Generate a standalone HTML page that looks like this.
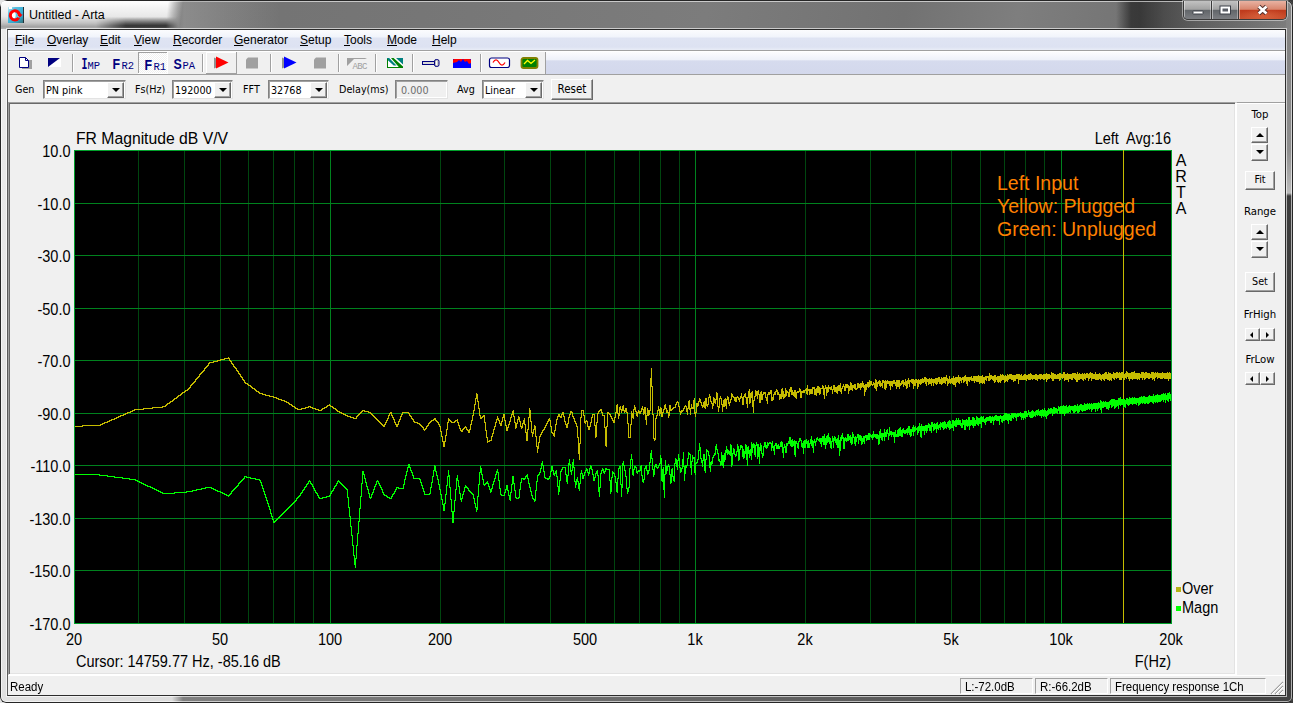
<!DOCTYPE html>
<html><head><meta charset="utf-8"><title>Untitled - Arta</title>
<style>
*{box-sizing:border-box;margin:0;padding:0}
html,body{width:1293px;height:703px;overflow:hidden;background:linear-gradient(90deg,#e4e4e4 0,#e4e4e4 50%,#3a3a3a 50%,#3a3a3a 100%)}
body{position:relative;font-family:"Liberation Sans",Arial,sans-serif;font-size:12px;color:#000}
.abs,.abs *{position:absolute}
#frame{position:absolute;left:0;top:0;width:1293px;height:703px;border-radius:7px 7px 6px 6px;overflow:hidden;
 background:
  linear-gradient(90deg,rgba(0,0,0,0) 1116px,rgba(20,20,20,.6) 1131px,rgba(20,20,20,.62) 1140px,rgba(20,20,20,.42) 1165px,rgba(20,20,20,.25) 1200px,rgba(0,0,0,0) 1293px) 0 0/1293px 29px no-repeat,
  linear-gradient(90deg,#e2e2e2 0,#dcdcdc 172px,#808080 183px,#747474 500px,#5a5a5a 900px,#454545 1200px,#434343 1293px) 0 696px/1293px 7px no-repeat,
  linear-gradient(180deg,#ececec 0,#e0e0e0 100%) 0 0/7px 703px no-repeat,
  linear-gradient(180deg,#868686 0,#848484 60px,#8e8e8e 150px,#bcbcbc 193px,#3c3c3c 196px,#3e3e3e 703px) 1286px 0/7px 703px no-repeat,
  linear-gradient(100deg,#707070 0,#767676 30%,#7c7c7c 50%,#727272 64%,#7e7e7e 72%,#747474 80%,#868686 100%);
 box-shadow:inset 0 0 0 1px #262626, inset 0 0 0 2px rgba(255,255,255,.6);}
#tglow{position:absolute;left:1px;top:1px;width:190px;height:28px;background:linear-gradient(180deg,#ffffff 0,#f4f4f4 25%,#e8e8e8 55%,#c4c4c4 78%,#a2a2a2 92%,#b4b4b4 100%);-webkit-mask-image:linear-gradient(97deg,#000 0,#000 166px,transparent 181px);mask-image:linear-gradient(97deg,#000 0,#000 166px,transparent 181px)}
#tshadow{position:absolute;left:96px;top:17px;width:84px;height:11px;background:linear-gradient(180deg,rgba(50,50,50,0) 0,rgba(50,50,50,.55) 45%,rgba(45,45,45,.95) 80%,rgba(60,60,60,.9) 100%);-webkit-mask-image:linear-gradient(90deg,transparent 0,#000 30px,#000 70px,transparent 82px);mask-image:linear-gradient(90deg,transparent 0,#000 30px,#000 70px,transparent 82px)}
#tlite{position:absolute;left:170px;top:1px;width:110px;height:28px;background:linear-gradient(90deg,rgba(160,160,160,.0) 0,rgba(160,160,160,.55) 14px,rgba(150,150,150,0) 100%)}
#title{position:absolute;left:29px;top:8px;font-size:12.5px;line-height:15px;white-space:nowrap;color:#000}
#client{position:absolute;left:7px;top:29px;width:1279px;height:667px;border:1px solid #2c2c2c;border-left-color:#5a5a5a;background:#f0f0f0;box-shadow:0 0 0 1px rgba(255,255,255,.62)}
#menubar{position:absolute;left:8px;top:30px;width:1277px;height:20px;background:linear-gradient(180deg,#fbfcfe 0,#f1f4fb 35%,#dfe4f3 40%,#dde2f2 85%,#e9edf7 100%)}
#menubar span{position:absolute;top:3px;line-height:15px;white-space:nowrap}
#menubar u{text-decoration:underline;text-underline-offset:1px}
#mline{position:absolute;left:8px;top:50px;width:1277px;height:2px;background:linear-gradient(180deg,#a0a0a0 0,#a0a0a0 50%,#fff 50%)}
#rebar{position:absolute;left:8px;top:52px;width:1277px;height:22px;background:linear-gradient(180deg,#fcfcfe 0,#eef1f9 36%,#d6dbee 40%,#d3d8ec 100%)}
#toolbar{position:absolute;left:8px;top:52px;width:538px;height:22px;background:#f0f0f0;border-right:1px solid #a0a0a0}
#rline{position:absolute;left:8px;top:74px;width:1277px;height:1px;background:#a0a0a0}
#ctl{position:absolute;left:8px;top:76px;width:1277px;height:26px;background:#f0f0f0;font-size:10.7px;font-family:"DejaVu Sans Condensed","DejaVu Sans","Liberation Sans",sans-serif}
#ctl span{position:absolute;top:7px;line-height:13px;white-space:nowrap}
.combo{position:absolute;top:4px;height:19px;background:#fff;border:1px solid;border-color:#828282 #e3e3e3 #e3e3e3 #828282;box-shadow:inset 1px 1px 0 #a0a0a0, inset -1px -1px 0 #fff}
.combo b{position:absolute;left:2px;top:3px;font-weight:normal;font-size:10.7px;line-height:13px}
.combo i{position:absolute;right:1px;top:1px;width:17px;height:16px;background:#f0f0f0;border:1px solid;border-color:#fff #696969 #696969 #fff;box-shadow:inset -1px -1px 0 #a0a0a0}
.combo i:after{content:"";position:absolute;left:4px;top:5px;border:4px solid transparent;border-top:4px solid #000;border-bottom:0}
.btn{position:absolute;background:#f0f0f0;border:1px solid;border-color:#fff #696969 #696969 #fff;box-shadow:inset -1px -1px 0 #a0a0a0, inset 1px 1px 0 #f0f0f0;font-size:10.7px;text-align:center}
#view{position:absolute;left:8px;top:102px;width:1228px;height:573px;background:#f0f0f0;border:1px solid;border-color:#a0a0a0 #fff #fff #a0a0a0;box-shadow:inset 1px 1px 0 #696969, inset -1px -1px 0 #e3e3e3}
#side{position:absolute;left:1236px;top:102px;width:49px;height:573px;background:#f0f0f0;border-top:1px solid #a0a0a0;border-left:1px solid #fff;box-shadow:inset 0 1px 0 #fff;font-size:11.3px;font-family:"DejaVu Sans Condensed","DejaVu Sans","Liberation Sans",sans-serif}
#side span{position:absolute;left:0;width:46px;text-align:center;line-height:13px}
.sp{position:absolute;width:17px;height:16px;background:#f0f0f0;border:1px solid;border-color:#fff #696969 #696969 #fff;box-shadow:inset -1px -1px 0 #a0a0a0}
.sp:after{content:"";position:absolute;left:4px;top:4px;border:4px solid transparent}
.sp.u:after{border-bottom:4px solid #000;border-top:0;top:5px}
.sp.d:after{border-top:4px solid #000;border-bottom:0;top:5px}
.hs{position:absolute;width:15px;height:13px;background:#f0f0f0;border:1px solid;border-color:#fff #696969 #696969 #fff;box-shadow:inset -1px -1px 0 #a0a0a0}
.hs:after{content:"";position:absolute;top:3px;border:3px solid transparent}
.hs.l:after{left:2px;border-right:3px solid #000;border-left:0;left:4px}
.hs.r:after{left:5px;border-left:3px solid #000;border-right:0}
#status{position:absolute;left:8px;top:675px;width:1277px;height:20px;background:#f0f0f0;border-top:1px solid #fff;font-size:11.5px}
#status span{position:absolute;top:4px;line-height:15px;white-space:nowrap;font-size:12px;transform:scaleX(.955);transform-origin:0 0}
.pane{position:absolute;top:2px;height:16px;border:1px solid;border-color:#a0a0a0 #fff #fff #a0a0a0}
.plot{position:absolute;left:0;top:0}
.tsep{position:absolute;top:3px;width:2px;height:18px;border-left:1px solid #a0a0a0;border-right:1px solid #fff}
.tt{position:absolute;top:4px;color:#000080;font-weight:bold;font-family:"Liberation Mono","DejaVu Sans Mono",monospace;white-space:nowrap;line-height:16px}
.tt big{font-size:17px;font-family:"Liberation Sans",sans-serif;font-weight:bold}
.tt small{font-size:11px;font-weight:normal;letter-spacing:0}
#caps{position:absolute;left:1183px;top:1px;width:104px;height:19px;border:1px solid #3a3a3a;border-top:0;border-radius:0 0 5px 5px;overflow:hidden;box-shadow:0 0 0 1px rgba(255,255,255,.45)}
#caps div{position:absolute;top:0;height:18px}
</style></head><body>
<div id="frame">
<div id="tlite"></div><div id="tglow"></div><div id="tshadow"></div>
<svg style="position:absolute;left:8px;top:7px" width="16" height="16" viewBox="0 0 16 16">
<defs><linearGradient id="ibg" x1="0" y1="0" x2="1" y2="1"><stop offset="0" stop-color="#c8ecf6"/><stop offset=".25" stop-color="#58bfe0"/><stop offset=".7" stop-color="#2fa6cf"/><stop offset="1" stop-color="#3b6a6a"/></linearGradient></defs>
<rect width="16" height="16" fill="url(#ibg)"/>
<rect x="15" y="0" width="1" height="16" fill="#22343c"/><rect x="1" y="0" width="3" height="2" fill="#fff"/>
<circle cx="7" cy="8.200" r="4.600" fill="#5ccbe4"/>
<ellipse cx="5.700" cy="8.100" rx="2" ry="3.500" fill="#fff"/>
<path d="M11.400 9.300A4.600 4.600 0 1 0 10.800 10.800" fill="none" stroke="#ff0000" stroke-width="3"/>
<path d="M8.800 5.600L14.700 7.700L11.700 10.500L10.300 8.300Z" fill="#ff0000"/>
</svg>
<div id="title">Untitled - Arta</div>
<div id="caps">
<div style="left:0;width:28px;background:linear-gradient(180deg,#c2c2c2 0,#a2a2a2 46%,#62666a 52%,#7c7e82 100%);border-right:1px solid #3a3a3a;box-shadow:inset 1px 0 0 rgba(255,255,255,.45),inset -1px 0 0 rgba(255,255,255,.35)"></div>
<div style="left:28px;width:27px;background:linear-gradient(180deg,#c2c2c2 0,#a2a2a2 46%,#62666a 52%,#7c7e82 100%);border-right:1px solid #3a3a3a;box-shadow:inset 1px 0 0 rgba(255,255,255,.45),inset -1px 0 0 rgba(255,255,255,.35)"></div>
<div style="left:55px;width:48px;background:radial-gradient(ellipse 24px 8px at 50% 85%,rgba(226,110,70,.6),rgba(200,60,30,0)),linear-gradient(180deg,#e8b2a2 0,#d8866e 46%,#bf3a1c 52%,#c9502e 100%);box-shadow:inset 1px 0 0 rgba(255,255,255,.45),inset -1px 0 0 rgba(255,255,255,.35)"></div>
<svg style="left:0;top:0;position:absolute" width="104" height="19" viewBox="0 0 104 19">
<rect x="9" y="10" width="10" height="3" rx="0.500" fill="#fff" stroke="#3c4048" stroke-width="1"/>
<rect x="37.500" y="6.500" width="7.500" height="5" fill="none" stroke="#3c4048" stroke-width="4"/><rect x="37.500" y="6.500" width="7.500" height="5" fill="#5a5e66" stroke="#fff" stroke-width="2"/>
<path d="M74.800 5.500L82.500 12.500M82.500 5.500L74.800 12.500" stroke="#53302c" stroke-width="4.400" fill="none"/>
<path d="M74.800 5.500L82.500 12.500M82.500 5.500L74.800 12.500" stroke="#fff" stroke-width="2.600" fill="none"/>
</svg>
</div>
</div>
<div id="client"></div>
<div id="menubar">
<span style="left:7px"><u>F</u>ile</span><span style="left:39px"><u>O</u>verlay</span><span style="left:92px"><u>E</u>dit</span><span style="left:126px"><u>V</u>iew</span><span style="left:165px"><u>R</u>ecorder</span><span style="left:226px"><u>G</u>enerator</span><span style="left:292px"><u>S</u>etup</span><span style="left:336px"><u>T</u>ools</span><span style="left:379px"><u>M</u>ode</span><span style="left:424px"><u>H</u>elp</span>
</div>
<div id="mline"></div>
<div id="rebar"></div>
<div id="toolbar">
<svg style="position:absolute;left:0;top:-1px" width="538" height="24" viewBox="0 0 538 24" shape-rendering="crispEdges">
<defs><pattern id="dith" width="2" height="2" patternUnits="userSpaceOnUse"><rect width="2" height="2" fill="#f0f0f0"/><rect width="1" height="1" fill="#fff"/><rect x="1" y="1" width="1" height="1" fill="#fff"/></pattern></defs>
<!-- new doc -->
<rect x="14" y="9" width="10" height="9" fill="#a0a0a0"/>
<path d="M11.500 6.500h6l3 3v7h-9z" fill="#fff" stroke="#000080" stroke-width="1" shape-rendering="auto"/>
<path d="M17.500 6.500v3h3" fill="none" stroke="#000080" stroke-width="1" shape-rendering="auto"/>
<!-- triangle -->
<rect x="40" y="7" width="13" height="9" fill="#fff"/>
<path d="M40 7h12l-12 9z" fill="#000080" shape-rendering="auto"/>
<!-- separators -->
<g fill="#a0a0a0"><rect x="64" y="3" width="1" height="18"/><rect x="194" y="3" width="1" height="18"/><rect x="262" y="3" width="1" height="18"/><rect x="330" y="3" width="1" height="18"/><rect x="367" y="3" width="1" height="18"/><rect x="404" y="3" width="1" height="18"/><rect x="472" y="3" width="1" height="18"/></g>
<g fill="#fff"><rect x="65" y="3" width="1" height="18"/><rect x="195" y="3" width="1" height="18"/><rect x="263" y="3" width="1" height="18"/><rect x="331" y="3" width="1" height="18"/><rect x="368" y="3" width="1" height="18"/><rect x="405" y="3" width="1" height="18"/><rect x="473" y="3" width="1" height="18"/></g>
<!-- pressed FR1 -->
<rect x="130" y="1" width="30" height="22" fill="url(#dith)"/>
<rect x="130" y="1" width="30" height="1" fill="#a0a0a0"/><rect x="130" y="1" width="1" height="22" fill="#a0a0a0"/><rect x="130" y="22" width="30" height="1" fill="#fff"/><rect x="159" y="1" width="1" height="22" fill="#fff"/>
<!-- raised red play -->
<rect x="198" y="1" width="31" height="1" fill="#fff"/><rect x="198" y="1" width="1" height="22" fill="#fff"/><rect x="198" y="22" width="31" height="1" fill="#a0a0a0"/><rect x="228" y="1" width="1" height="22" fill="#a0a0a0"/>
<g shape-rendering="auto">
<path d="M206 6.500l0 11 12-5.500z" fill="#909090"/>
<path d="M208 5.500l0 12 12.500-6z" fill="#ff0000"/>
<path d="M240 6.500h10v11h-12v-9z" fill="#a0a0a0"/>
<path d="M274 6.500l0 11 12-5.500z" fill="#909090"/>
<path d="M276 5.500l0 12 12.500-6z" fill="#0000ff"/>
<path d="M308 6.500h10v11h-12v-9z" fill="#a0a0a0"/>
<path d="M339 7h20l-2 1h-11l-7 7z" fill="#a0a0a0"/>
</g>
<!-- green hatch -->
<rect x="379" y="7" width="16" height="10" fill="#fff"/>
<g shape-rendering="auto"><path d="M379 7h2.200l7.300 7.500h-2.800l-6.700-6z" fill="#008080"/><path d="M383 7h2.600l9.400 8.600v1.400h-3.400z" fill="#008000"/><path d="M388 7h7v6.600z" fill="#008080"/></g>
<rect x="379" y="8" width="1" height="9" fill="#008000"/><rect x="379" y="16" width="16" height="1" fill="#008000"/>
<!-- key -->
<g shape-rendering="auto"><rect x="414.500" y="10.500" width="12" height="3" fill="#d8d8d8" stroke="#000080"/><rect x="426.500" y="8.500" width="4.500" height="7" rx="1.800" fill="#c0c0c0" stroke="#000080"/><rect x="428" y="10" width="1.200" height="4" fill="#fff"/></g>
<!-- blue/red -->
<rect x="445" y="8" width="18" height="9" fill="#0000ff"/>
<path d="M445 12v-3l1-1h16l1 1v3l-2 1-2-3-2 1-2-3-2 3-2-2-2 2z" fill="#ff0000" shape-rendering="auto"/>
<!-- red sine box -->
<g shape-rendering="auto"><rect x="481.500" y="7" width="20" height="9.500" rx="2" fill="#fff" stroke="#000080" stroke-width="1.200"/><path d="M485 11.500c2-3.500 4-3.500 6 0s4 3.500 6 0" fill="none" stroke="#ff0000" stroke-width="1.300"/></g>
<!-- green box -->
<g shape-rendering="auto"><rect x="513.500" y="7" width="16" height="10" rx="2" fill="#008000" stroke="#808000" stroke-width="1.800"/><path d="M516 13l3.500-3.500 3.500 3 4-3.500" fill="none" stroke="#ffff00" stroke-width="1.300"/></g>
<g shape-rendering="auto" font-family="'Liberation Sans',sans-serif" fill="#000080">
<text transform="translate(73.5,17.5) scale(.62,1)" font-family="'Liberation Mono',monospace" font-weight="bold" font-size="16px">I</text>
<text x="79.500" y="17.500" font-family="'Liberation Mono',monospace" font-size="10.5px">MP</text>
<text transform="translate(104.5,17.5) scale(.8,1)" font-weight="bold" font-size="15.500px">F</text>
<text x="113.500" y="17.500" font-family="'Liberation Mono',monospace" font-size="10.5px">R2</text>
<text transform="translate(136.5,18.5) scale(.8,1)" font-weight="bold" font-size="15.500px">F</text>
<text x="145.500" y="18.500" font-family="'Liberation Mono',monospace" font-size="10.5px">R1</text>
<text transform="translate(165.5,17.5) scale(.8,1)" font-weight="bold" font-size="15.500px">S</text>
<text x="174.500" y="17.500" font-family="'Liberation Mono',monospace" font-size="10.5px">PA</text>
<text x="344.500" y="17.500" font-family="'Liberation Mono',monospace" font-size="9px" fill="#a0a0a0" textLength="15">ABC</text>
</g>
</svg>

</div>
<div id="rline"></div>
<div id="ctl">
<span style="left:7px">Gen</span>
<div class="combo" style="left:35px;width:83px"><b>PN pink</b><i></i></div>
<span style="left:127px">Fs(Hz)</span>
<div class="combo" style="left:164px;width:61px"><b>192000</b><i></i></div>
<span style="left:235px">FFT</span>
<div class="combo" style="left:260px;width:61px"><b>32768</b><i></i></div>
<span style="left:331px">Delay(ms)</span>
<div class="combo" style="left:387px;width:53px;background:#f0f0f0"><b style="color:#6d6d6d;left:5px">0.000</b></div>
<span style="left:449px">Avg</span>
<div class="combo" style="left:474px;width:62px"><b>Linear</b><i></i></div>
<div class="btn" style="left:543px;top:3px;width:42px;height:21px;line-height:19px;font-size:11.5px">Reset</div>
</div>
<div id="view"></div>
<div id="side">
<span style="top:5px">Top</span>
<div class="sp u" style="left:14px;top:24px"></div><div class="sp d" style="left:14px;top:41px;height:17px"></div>
<div class="btn" style="left:8px;top:68px;width:30px;height:19px;line-height:16px">Fit</div>
<span style="top:102px">Range</span>
<div class="sp u" style="left:14px;top:121px"></div><div class="sp d" style="left:14px;top:138px;height:17px"></div>
<div class="btn" style="left:8px;top:169px;width:30px;height:20px;line-height:17px">Set</div>
<span style="top:205px">FrHigh</span>
<div class="hs l" style="left:8px;top:225px"></div><div class="hs r" style="left:23px;top:225px"></div>
<span style="top:250px">FrLow</span>
<div class="hs l" style="left:8px;top:269px"></div><div class="hs r" style="left:23px;top:269px"></div>
</div>
<div id="status">
<span style="left:2px">Ready</span>
<div class="pane" style="left:952px;width:73px"></div><span style="left:957px">L:-72.0dB</span>
<div class="pane" style="left:1027px;width:73px"></div><span style="left:1032px">R:-66.2dB</span>
<div class="pane" style="left:1102px;width:156px"></div><span style="left:1107px">Frequency response 1Ch</span>
<svg style="position:absolute;left:1262px;top:5px" width="14" height="14" viewBox="0 0 14 14"><path d="M13 1L1 13M13 5L5 13M13 9L9 13" stroke="#a0a0a0" stroke-width="1.2"/><path d="M13 2L2 13M13 6L6 13M13 10L10 13" stroke="#fff" stroke-width="1"/></svg>
</div>
<svg class="plot" width="1293" height="703" viewBox="0 0 1293 703" shape-rendering="crispEdges">
<rect x="74" y="150" width="1098" height="474" fill="#000"/>
<rect x="138" y="150" width="1" height="473" fill="#00460f"/><rect x="184" y="150" width="1" height="473" fill="#00460f"/><rect x="220" y="150" width="1" height="473" fill="#00460f"/><rect x="248" y="150" width="1" height="473" fill="#00460f"/><rect x="273" y="150" width="1" height="473" fill="#00460f"/><rect x="294" y="150" width="1" height="473" fill="#00460f"/><rect x="313" y="150" width="1" height="473" fill="#00460f"/><rect x="440" y="150" width="1" height="473" fill="#00460f"/><rect x="504" y="150" width="1" height="473" fill="#00460f"/><rect x="550" y="150" width="1" height="473" fill="#00460f"/><rect x="585" y="150" width="1" height="473" fill="#00460f"/><rect x="614" y="150" width="1" height="473" fill="#00460f"/><rect x="639" y="150" width="1" height="473" fill="#00460f"/><rect x="660" y="150" width="1" height="473" fill="#00460f"/><rect x="679" y="150" width="1" height="473" fill="#00460f"/><rect x="805" y="150" width="1" height="473" fill="#00460f"/><rect x="870" y="150" width="1" height="473" fill="#00460f"/><rect x="915" y="150" width="1" height="473" fill="#00460f"/><rect x="951" y="150" width="1" height="473" fill="#00460f"/><rect x="980" y="150" width="1" height="473" fill="#00460f"/><rect x="1004" y="150" width="1" height="473" fill="#00460f"/><rect x="1025" y="150" width="1" height="473" fill="#00460f"/><rect x="1044" y="150" width="1" height="473" fill="#00460f"/><rect x="330" y="150" width="1" height="473" fill="#00821e"/><rect x="695" y="150" width="1" height="473" fill="#00821e"/><rect x="1061" y="150" width="1" height="473" fill="#00821e"/><rect x="74" y="203" width="1097" height="1" fill="#00821e"/><rect x="74" y="255" width="1097" height="1" fill="#00821e"/><rect x="74" y="308" width="1097" height="1" fill="#00821e"/><rect x="74" y="360" width="1097" height="1" fill="#00821e"/><rect x="74" y="413" width="1097" height="1" fill="#00821e"/><rect x="74" y="465" width="1097" height="1" fill="#00821e"/><rect x="74" y="518" width="1097" height="1" fill="#00821e"/><rect x="74" y="570" width="1097" height="1" fill="#00821e"/>
<rect x="74.5" y="150.5" width="1097" height="473" fill="none" stroke="#00a02a"/>
<rect x="1123" y="150" width="1" height="473" fill="#c6bc00"/>
<path d="M75.5 426v1M76.5 426v1M77.5 426v1M78.5 426v1M79.5 426v1M80.5 426v1M81.5 426v1M82.5 425v2M83.5 425v1M84.5 425v1M85.5 425v1M86.5 425v1M87.5 425v1M88.5 425v1M89.5 425v1M90.5 425v1M91.5 425v1M92.5 425v1M93.5 425v1M94.5 425v1M95.5 425v1M96.5 425v1M97.5 425v1M98.5 425v1M99.5 425v1M100.5 424v2M101.5 424v1M102.5 423v2M103.5 423v1M104.5 422v2M105.5 422v1M106.5 422v1M107.5 421v2M108.5 421v1M109.5 420v2M110.5 420v1M111.5 419v2M112.5 419v1M113.5 419v1M114.5 418v2M115.5 418v1M116.5 417v2M117.5 417v1M118.5 416v2M119.5 416v1M120.5 415v2M121.5 415v1M122.5 415v1M123.5 414v2M124.5 414v1M125.5 413v2M126.5 413v1M127.5 412v2M128.5 412v1M129.5 412v1M130.5 411v2M131.5 411v1M132.5 410v2M133.5 410v1M134.5 409v2M135.5 409v1M136.5 409v1M137.5 409v1M138.5 409v1M139.5 409v1M140.5 409v1M141.5 409v1M142.5 409v1M143.5 408v2M144.5 408v1M145.5 408v1M146.5 408v1M147.5 408v1M148.5 408v1M149.5 408v1M150.5 408v1M151.5 408v1M152.5 407v2M153.5 407v1M154.5 407v1M155.5 407v1M156.5 407v1M157.5 407v1M158.5 407v1M159.5 407v1M160.5 407v1M161.5 407v1M162.5 406v2M163.5 406v1M164.5 406v1M165.5 405v2M166.5 404v2M167.5 403v2M168.5 403v1M169.5 402v2M170.5 401v2M171.5 401v1M172.5 400v2M173.5 399v2M174.5 398v2M175.5 398v1M176.5 397v2M177.5 396v2M178.5 395v2M179.5 395v1M180.5 394v2M181.5 393v2M182.5 392v2M183.5 392v1M184.5 391v2M185.5 390v2M186.5 390v1M187.5 389v2M188.5 388v2M189.5 387v2M190.5 385v3M191.5 384v2M192.5 383v2M193.5 382v2M194.5 381v2M195.5 379v3M196.5 378v2M197.5 377v2M198.5 376v2M199.5 374v3M200.5 373v2M201.5 372v2M202.5 371v2M203.5 370v2M204.5 368v3M205.5 367v2M206.5 366v2M207.5 365v2M208.5 363v3M209.5 362v2M210.5 362v1M211.5 362v1M212.5 362v1M213.5 361v2M214.5 361v1M215.5 361v1M216.5 361v1M217.5 360v2M218.5 360v1M219.5 360v1M220.5 359v2M221.5 359v1M222.5 359v1M223.5 359v1M224.5 358v2M225.5 358v1M226.5 358v1M227.5 358v1M228.5 357v2M229.5 358v3M230.5 360v2M231.5 361v3M232.5 363v2M233.5 364v3M234.5 366v2M235.5 367v2M236.5 368v3M237.5 370v2M238.5 371v3M239.5 373v2M240.5 374v3M241.5 376v2M242.5 377v3M243.5 379v2M244.5 380v3M245.5 382v2M246.5 383v1M247.5 383v2M248.5 384v2M249.5 385v1M250.5 385v2M251.5 386v2M252.5 387v2M253.5 388v1M254.5 388v2M255.5 389v2M256.5 390v2M257.5 391v1M258.5 391v2M259.5 392v2M260.5 393v1M261.5 393v1M262.5 393v2M263.5 394v1M264.5 394v1M265.5 394v2M266.5 395v1M267.5 395v1M268.5 395v1M269.5 395v2M270.5 396v1M271.5 396v1M272.5 396v1M273.5 396v2M274.5 397v1M275.5 397v1M276.5 397v2M277.5 398v1M278.5 398v2M279.5 399v1M280.5 399v1M281.5 399v2M282.5 400v1M283.5 400v1M284.5 400v2M285.5 401v1M286.5 401v2M287.5 402v1M288.5 402v2M289.5 403v2M290.5 404v1M291.5 404v2M292.5 405v2M293.5 406v1M294.5 406v2M295.5 407v2M296.5 408v1M297.5 408v2M298.5 409v1M299.5 409v1M300.5 409v1M301.5 408v2M302.5 408v1M303.5 408v1M304.5 408v1M305.5 407v2M306.5 407v1M307.5 407v1M308.5 406v2M309.5 406v1M310.5 406v2M311.5 407v1M312.5 407v2M313.5 408v1M314.5 408v1M315.5 408v2M316.5 409v1M317.5 409v1M318.5 409v2M319.5 410v1M320.5 410v1M321.5 409v2M322.5 408v2M323.5 408v1M324.5 407v2M325.5 407v1M326.5 406v2M327.5 405v2M328.5 405v1M329.5 404v2M330.5 405v2M331.5 406v1M332.5 406v2M333.5 407v2M334.5 408v1M335.5 408v2M336.5 409v2M337.5 410v2M338.5 411v1M339.5 411v2M340.5 412v1M341.5 412v2M342.5 413v1M343.5 413v2M344.5 414v1M345.5 414v2M346.5 415v1M347.5 415v2M348.5 416v1M349.5 416v1M350.5 416v2M351.5 417v1M352.5 417v1M353.5 417v2M354.5 418v1M355.5 418v1M356.5 416v3M357.5 415v2M358.5 414v2M359.5 413v2M360.5 412v2M361.5 411v2M362.5 410v2M363.5 410v1M364.5 410v2M365.5 411v1M366.5 411v1M367.5 411v1M368.5 411v2M369.5 412v1M370.5 412v2M371.5 413v2M372.5 414v2M373.5 415v2M374.5 416v2M375.5 417v2M376.5 418v2M377.5 419v2M378.5 420v2M379.5 421v2M380.5 422v2M381.5 423v2M382.5 424v2M383.5 425v2M384.5 424v3M385.5 422v3M386.5 420v3M387.5 418v3M388.5 415v4M389.5 413v3M390.5 412v2M391.5 412v4M392.5 415v3M393.5 417v3M394.5 419v4M395.5 422v3M396.5 424v3M397.5 424v3M398.5 421v4M399.5 419v3M400.5 416v4M401.5 414v3M402.5 412v3M403.5 412v1M404.5 412v1M405.5 412v1M406.5 412v1M407.5 412v1M408.5 412v2M409.5 413v3M410.5 415v2M411.5 416v3M412.5 418v2M413.5 419v3M414.5 421v2M415.5 422v1M416.5 422v1M417.5 422v2M418.5 423v1M419.5 423v2M420.5 424v2M421.5 425v2M422.5 426v2M423.5 427v3M424.5 429v2M425.5 428v2M426.5 426v3M427.5 425v2M428.5 423v3M429.5 422v2M430.5 421v2M431.5 420v2M432.5 420v1M433.5 419v2M434.5 418v2M435.5 418v3M436.5 420v2M437.5 421v2M438.5 422v3M439.5 424v3M440.5 426v6M441.5 431v6M442.5 436v6M443.5 441v6M444.5 441v6M445.5 435v7M446.5 429v7M447.5 422v8M448.5 418v5M449.5 419v2M450.5 420v2M451.5 421v2M452.5 422v1M453.5 422v1M454.5 421v2M455.5 420v2M456.5 420v1M457.5 419v4M458.5 422v4M459.5 425v4M460.5 428v3M461.5 430v2M462.5 429v3M463.5 428v2M464.5 427v2M465.5 426v2M466.5 427v3M467.5 429v2M468.5 430v3M469.5 429v4M470.5 424v6M471.5 420v5M472.5 415v6M473.5 410v6M474.5 404v7M475.5 398v7M476.5 393v6M477.5 394v8M478.5 401v8M479.5 408v8M480.5 415v4M481.5 417v2M482.5 416v2M483.5 415v2M484.5 415v8M485.5 422v9M486.5 430v8M487.5 437v6M488.5 441v1M489.5 440v2M490.5 440v1M491.5 436v5M492.5 433v4M493.5 429v5M494.5 426v4M495.5 422v5M496.5 419v4M497.5 416v4M498.5 418v3M499.5 420v4M500.5 423v3M501.5 421v5M502.5 417v5M503.5 414v4M504.5 414v7M505.5 420v6M506.5 425v6M507.5 427v4M508.5 424v4M509.5 421v4M510.5 417v5M511.5 414v4M512.5 411v4M513.5 410v7M514.5 416v7M515.5 422v7M516.5 423v5M517.5 419v5M518.5 416v4M519.5 417v5M520.5 421v6M521.5 426v3M522.5 423v5M523.5 420v4M524.5 418v7M525.5 424v9M526.5 432v9M527.5 429v12M528.5 417v13M529.5 408v10M530.5 410v12M531.5 421v12M532.5 432v5M533.5 429v5M534.5 425v5M535.5 426v11M536.5 436v11M537.5 446v7M538.5 442v7M539.5 436v7M540.5 434v3M541.5 432v3M542.5 430v3M543.5 429v2M544.5 427v3M545.5 425v3M546.5 423v3M547.5 421v3M548.5 419v3M549.5 418v3M550.5 420v7M551.5 426v7M552.5 432v2M553.5 433v3M554.5 430v7M555.5 424v7M556.5 419v6M557.5 416v4M558.5 414v3M559.5 414v3M560.5 416v2M561.5 414v4M562.5 412v3M563.5 412v5M564.5 416v6M565.5 421v4M566.5 424v4M567.5 423v5M568.5 417v7M569.5 414v4M570.5 411v4M571.5 411v2M572.5 412v5M573.5 416v3M574.5 418v4M575.5 421v3M576.5 423v4M577.5 426v12M578.5 437v17M579.5 443v17M580.5 417v27M581.5 410v8M582.5 410v1M583.5 410v6M584.5 415v8M585.5 421v3M586.5 420v2M587.5 421v6M588.5 426v4M589.5 426v4M590.5 422v5M591.5 417v6M592.5 414v4M593.5 414v1M594.5 414v12M595.5 425v13M596.5 422v15M597.5 413v10M598.5 411v3M599.5 410v2M600.5 409v2M601.5 409v4M602.5 412v4M603.5 415v1M604.5 415v13M605.5 427v19M606.5 426v21M607.5 412v15M608.5 412v2M609.5 413v2M610.5 414v3M611.5 416v3M612.5 418v3M613.5 420v3M614.5 417v6M615.5 412v6M616.5 405v8M617.5 404v10M618.5 413v6M619.5 407v9M620.5 406v4M621.5 409v4M622.5 406v5M623.5 405v6M624.5 410v3M625.5 408v4M626.5 408v5M627.5 412v12M628.5 423v15M629.5 437v1M630.5 424v14M631.5 411v14M632.5 413v5M633.5 409v10M634.5 405v5M635.5 407v5M636.5 411v5M637.5 412v5M638.5 410v3M639.5 411v3M640.5 411v3M641.5 408v4M642.5 406v4M643.5 409v6M644.5 407v7M645.5 407v13M646.5 415v10M647.5 408v8M648.5 410v6M649.5 410v5M650.5 378v33M651.5 368v19M652.5 386v29M653.5 414v25M654.5 438v3M655.5 418v22M656.5 415v4M657.5 410v6M658.5 406v5M659.5 409v7M660.5 407v7M661.5 408v9M662.5 412v5M663.5 409v4M664.5 405v5M665.5 404v5M666.5 408v5M667.5 410v3M668.5 412v6M669.5 405v11M670.5 405v6M671.5 409v2M672.5 408v2M673.5 407v2M674.5 407v1M675.5 404v4M676.5 402v3M677.5 401v2M678.5 402v5M679.5 406v6M680.5 411v4M681.5 410v3M682.5 410v2M683.5 408v3M684.5 406v3M685.5 405v2M686.5 406v6M687.5 408v7M688.5 401v8M689.5 400v10M690.5 408v7M691.5 404v5M692.5 407v2M693.5 400v9M694.5 398v16M695.5 412v5M696.5 403v10M697.5 403v4M698.5 401v5M699.5 398v4M700.5 399v4M701.5 402v4M702.5 405v3M703.5 402v5M704.5 401v7M705.5 398v11M706.5 398v8M707.5 404v3M708.5 397v8M709.5 394v4M710.5 396v6M711.5 401v3M712.5 403v6M713.5 397v9M714.5 398v5M715.5 399v5M716.5 392v8M717.5 393v14M718.5 406v6M719.5 398v10M720.5 396v3M721.5 398v7M722.5 404v8M723.5 400v7M724.5 399v8M725.5 398v8M726.5 399v10M727.5 396v4M728.5 397v7M729.5 402v4M730.5 399v4M731.5 393v7M732.5 394v3M733.5 396v2M734.5 397v4M735.5 397v5M736.5 397v5M737.5 396v2M738.5 397v3M739.5 398v4M740.5 396v3M741.5 393v5M742.5 397v8M743.5 396v9M744.5 394v3M745.5 393v5M746.5 397v7M747.5 397v11M748.5 391v7M749.5 389v15M750.5 393v10M751.5 392v6M752.5 391v16M753.5 400v13M754.5 396v5M755.5 390v7M756.5 391v5M757.5 391v8M758.5 390v5M759.5 394v9M760.5 392v11M761.5 391v9M762.5 394v6M763.5 392v3M764.5 392v2M765.5 392v6M766.5 397v4M767.5 394v10M768.5 392v3M769.5 392v3M770.5 390v4M771.5 390v11M772.5 397v4M773.5 394v6M774.5 392v3M775.5 391v4M776.5 389v3M777.5 390v5M778.5 392v3M779.5 394v6M780.5 394v5M781.5 389v10M782.5 388v9M783.5 391v8M784.5 394v4M785.5 388v9M786.5 390v6M787.5 391v2M788.5 392v5M789.5 389v8M790.5 387v5M791.5 387v8M792.5 390v5M793.5 392v4M794.5 390v7M795.5 390v8M796.5 392v7M797.5 391v2M798.5 391v2M799.5 388v4M800.5 389v9M801.5 391v7M802.5 391v2M803.5 390v3M804.5 390v3M805.5 389v2M806.5 388v6M807.5 385v10M808.5 389v2M809.5 389v6M810.5 389v5M811.5 389v5M812.5 387v7M813.5 387v2M814.5 387v8M815.5 389v6M816.5 388v8M817.5 386v7M818.5 386v7M819.5 387v8M820.5 388v6M821.5 388v1M822.5 385v4M823.5 386v9M824.5 388v11M825.5 385v4M826.5 387v9M827.5 387v6M828.5 385v7M829.5 387v2M830.5 387v3M831.5 386v4M832.5 389v5M833.5 385v5M834.5 385v7M835.5 387v5M836.5 387v6M837.5 386v8M838.5 385v6M839.5 385v6M840.5 383v9M841.5 388v6M842.5 386v3M843.5 384v3M844.5 386v5M845.5 384v7M846.5 384v4M847.5 384v4M848.5 385v9M849.5 386v5M850.5 382v8M851.5 383v7M852.5 385v6M853.5 385v3M854.5 384v5M855.5 384v6M856.5 388v2M857.5 383v6M858.5 383v5M859.5 384v4M860.5 383v7M861.5 383v5M862.5 381v6M863.5 383v5M864.5 385v11M865.5 384v8M866.5 384v6M867.5 382v5M868.5 382v6M869.5 380v7M870.5 381v5M871.5 381v4M872.5 384v2M873.5 382v3M874.5 383v5M875.5 379v10M876.5 380v11M877.5 382v5M878.5 381v3M879.5 380v6M880.5 381v6M881.5 383v3M882.5 380v8M883.5 380v3M884.5 381v8M885.5 380v10M886.5 381v7M887.5 380v4M888.5 381v3M889.5 381v5M890.5 381v9M891.5 381v5M892.5 381v6M893.5 380v4M894.5 380v4M895.5 382v4M896.5 380v9M897.5 380v7M898.5 380v7M899.5 380v9M900.5 383v3M901.5 381v4M902.5 380v4M903.5 380v7M904.5 382v3M905.5 379v7M906.5 381v8M907.5 380v8M908.5 378v6M909.5 380v7M910.5 380v2M911.5 379v4M912.5 379v5M913.5 379v10M914.5 380v6M915.5 379v7M916.5 379v4M917.5 380v9M918.5 379v8M919.5 380v4M920.5 379v6M921.5 379v5M922.5 378v5M923.5 379v4M924.5 377v5M925.5 377v7M926.5 378v8M927.5 379v3M928.5 379v6M929.5 378v6M930.5 379v5M931.5 378v8M932.5 379v4M933.5 379v7M934.5 379v4M935.5 378v6M936.5 378v7M937.5 378v6M938.5 377v5M939.5 377v7M940.5 379v5M941.5 377v8M942.5 378v6M943.5 377v6M944.5 377v6M945.5 377v7M946.5 375v6M947.5 378v8M948.5 379v5M949.5 376v7M950.5 379v5M951.5 378v5M952.5 378v6M953.5 376v9M954.5 378v7M955.5 377v10M956.5 377v6M957.5 377v5M958.5 375v8M959.5 377v7M960.5 377v4M961.5 378v5M962.5 377v3M963.5 377v6M964.5 376v6M965.5 375v6M966.5 377v7M967.5 377v9M968.5 377v4M969.5 377v5M970.5 377v3M971.5 376v5M972.5 378v3M973.5 376v5M974.5 376v7M975.5 376v5M976.5 376v6M977.5 376v6M978.5 375v7M979.5 376v8M980.5 376v7M981.5 376v7M982.5 375v9M983.5 377v6M984.5 377v7M985.5 376v4M986.5 376v5M987.5 376v2M988.5 376v5M989.5 373v8M990.5 375v5M991.5 375v4M992.5 376v4M993.5 376v5M994.5 375v8M995.5 375v7M996.5 377v3M997.5 376v6M998.5 376v7M999.5 376v6M1000.5 374v9M1001.5 375v6M1002.5 374v6M1003.5 375v5M1004.5 376v7M1005.5 375v7M1006.5 376v5M1007.5 374v8M1008.5 375v5M1009.5 374v5M1010.5 374v5M1011.5 374v6M1012.5 375v5M1013.5 375v7M1014.5 375v6M1015.5 375v6M1016.5 374v5M1017.5 374v5M1018.5 374v10M1019.5 374v6M1020.5 375v5M1021.5 374v6M1022.5 376v4M1023.5 375v5M1024.5 374v6M1025.5 374v6M1026.5 375v6M1027.5 375v4M1028.5 374v6M1029.5 374v6M1030.5 373v7M1031.5 374v5M1032.5 375v5M1033.5 375v4M1034.5 375v4M1035.5 374v6M1036.5 374v6M1037.5 375v6M1038.5 375v4M1039.5 374v5M1040.5 374v6M1041.5 374v5M1042.5 375v4M1043.5 374v6M1044.5 374v6M1045.5 374v5M1046.5 373v9M1047.5 374v6M1048.5 374v5M1049.5 374v5M1050.5 375v3M1051.5 372v7M1052.5 373v8M1053.5 373v8M1054.5 374v5M1055.5 374v5M1056.5 375v4M1057.5 374v5M1058.5 374v5M1059.5 373v8M1060.5 373v7M1061.5 374v4M1062.5 374v5M1063.5 372v6M1064.5 372v9M1065.5 374v6M1066.5 374v6M1067.5 373v7M1068.5 374v8M1069.5 374v5M1070.5 374v5M1071.5 374v6M1072.5 373v7M1073.5 373v5M1074.5 373v6M1075.5 373v7M1076.5 374v8M1077.5 372v10M1078.5 374v6M1079.5 373v7M1080.5 374v5M1081.5 374v5M1082.5 373v7M1083.5 374v7M1084.5 373v6M1085.5 374v6M1086.5 373v5M1087.5 373v5M1088.5 374v7M1089.5 373v6M1090.5 372v6M1091.5 373v8M1092.5 373v6M1093.5 374v5M1094.5 374v5M1095.5 372v8M1096.5 374v6M1097.5 374v6M1098.5 374v6M1099.5 373v6M1100.5 374v6M1101.5 375v6M1102.5 374v5M1103.5 374v6M1104.5 373v8M1105.5 372v7M1106.5 372v7M1107.5 374v6M1108.5 372v8M1109.5 373v8M1110.5 373v7M1111.5 374v7M1112.5 374v4M1113.5 372v7M1114.5 373v7M1115.5 373v5M1116.5 372v7M1117.5 372v6M1118.5 373v5M1119.5 372v8M1120.5 373v7M1121.5 372v8M1122.5 372v6M1123.5 372v8M1124.5 374v6M1125.5 373v5M1126.5 371v8M1127.5 372v5M1128.5 373v6M1129.5 373v8M1130.5 373v6M1131.5 372v7M1132.5 372v8M1133.5 372v7M1134.5 371v8M1135.5 373v6M1136.5 373v6M1137.5 373v7M1138.5 373v6M1139.5 373v7M1140.5 374v4M1141.5 372v6M1142.5 372v8M1143.5 372v6M1144.5 373v7M1145.5 372v7M1146.5 372v6M1147.5 373v5M1148.5 373v6M1149.5 373v6M1150.5 374v4M1151.5 372v6M1152.5 372v8M1153.5 372v7M1154.5 373v8M1155.5 372v6M1156.5 373v4M1157.5 372v7M1158.5 373v5M1159.5 373v5M1160.5 373v6M1161.5 373v6M1162.5 372v7M1163.5 373v5M1164.5 373v6M1165.5 373v6M1166.5 373v6M1167.5 372v7M1168.5 373v8M1169.5 372v7M1170.5 373v6" stroke="#c6bc00" fill="none"/>
<path d="M75.5 474v1M76.5 474v1M77.5 474v1M78.5 474v1M79.5 474v1M80.5 474v1M81.5 474v1M82.5 474v1M83.5 474v1M84.5 474v1M85.5 474v1M86.5 474v1M87.5 474v1M88.5 474v1M89.5 474v1M90.5 474v1M91.5 474v1M92.5 474v1M93.5 474v1M94.5 474v1M95.5 474v1M96.5 474v1M97.5 474v1M98.5 474v1M99.5 474v2M100.5 475v1M101.5 475v1M102.5 475v1M103.5 475v1M104.5 475v1M105.5 475v1M106.5 475v1M107.5 475v2M108.5 476v1M109.5 476v1M110.5 476v1M111.5 476v1M112.5 476v1M113.5 476v1M114.5 476v2M115.5 477v1M116.5 477v1M117.5 477v1M118.5 477v1M119.5 477v1M120.5 477v1M121.5 477v1M122.5 477v2M123.5 478v1M124.5 478v1M125.5 478v1M126.5 478v1M127.5 478v1M128.5 478v1M129.5 478v2M130.5 479v1M131.5 479v1M132.5 479v1M133.5 479v1M134.5 479v1M135.5 479v2M136.5 480v1M137.5 480v2M138.5 481v1M139.5 481v2M140.5 482v1M141.5 482v2M142.5 483v1M143.5 483v2M144.5 484v1M145.5 484v2M146.5 485v1M147.5 485v2M148.5 486v1M149.5 486v1M150.5 486v2M151.5 487v1M152.5 487v2M153.5 488v1M154.5 488v2M155.5 489v1M156.5 489v2M157.5 490v1M158.5 490v2M159.5 491v1M160.5 491v2M161.5 492v1M162.5 492v2M163.5 493v1M164.5 493v1M165.5 493v1M166.5 493v1M167.5 493v1M168.5 493v1M169.5 493v1M170.5 493v1M171.5 493v1M172.5 493v1M173.5 493v1M174.5 492v2M175.5 492v1M176.5 492v1M177.5 492v1M178.5 492v1M179.5 492v1M180.5 492v1M181.5 492v1M182.5 492v1M183.5 492v1M184.5 492v1M185.5 492v1M186.5 491v2M187.5 491v1M188.5 491v1M189.5 491v1M190.5 491v1M191.5 491v1M192.5 490v2M193.5 490v1M194.5 490v1M195.5 490v1M196.5 489v2M197.5 489v1M198.5 489v1M199.5 489v1M200.5 489v1M201.5 488v2M202.5 488v1M203.5 488v1M204.5 488v1M205.5 487v2M206.5 487v1M207.5 487v1M208.5 487v1M209.5 487v1M210.5 487v1M211.5 487v2M212.5 488v1M213.5 488v2M214.5 489v1M215.5 489v2M216.5 490v1M217.5 490v2M218.5 491v1M219.5 491v1M220.5 491v2M221.5 492v1M222.5 492v2M223.5 493v1M224.5 493v2M225.5 494v1M226.5 494v2M227.5 495v1M228.5 495v2M229.5 494v2M230.5 493v2M231.5 491v3M232.5 490v2M233.5 489v2M234.5 488v2M235.5 487v2M236.5 486v2M237.5 485v2M238.5 483v3M239.5 482v2M240.5 481v2M241.5 480v2M242.5 479v2M243.5 478v2M244.5 476v3M245.5 476v1M246.5 476v2M247.5 477v1M248.5 477v1M249.5 477v1M250.5 477v2M251.5 478v1M252.5 478v1M253.5 478v1M254.5 478v1M255.5 478v2M256.5 479v1M257.5 479v1M258.5 479v1M259.5 479v2M260.5 480v3M261.5 482v4M262.5 485v4M263.5 488v4M264.5 491v4M265.5 494v4M266.5 497v4M267.5 500v4M268.5 503v4M269.5 506v4M270.5 509v5M271.5 513v4M272.5 516v4M273.5 519v4M274.5 521v2M275.5 520v2M276.5 519v2M277.5 518v2M278.5 517v2M279.5 516v2M280.5 515v2M281.5 514v2M282.5 513v2M283.5 512v2M284.5 511v2M285.5 510v2M286.5 509v2M287.5 508v2M288.5 507v2M289.5 506v2M290.5 505v2M291.5 504v2M292.5 503v2M293.5 502v2M294.5 501v2M295.5 500v2M296.5 498v3M297.5 497v2M298.5 496v2M299.5 495v2M300.5 493v3M301.5 492v2M302.5 490v3M303.5 489v2M304.5 487v3M305.5 486v2M306.5 484v3M307.5 483v2M308.5 481v3M309.5 480v2M310.5 481v3M311.5 483v2M312.5 484v3M313.5 486v3M314.5 488v3M315.5 490v3M316.5 492v2M317.5 493v3M318.5 495v3M319.5 497v2M320.5 498v1M321.5 498v1M322.5 497v2M323.5 497v1M324.5 497v1M325.5 497v1M326.5 496v2M327.5 496v1M328.5 496v1M329.5 495v2M330.5 493v3M331.5 491v3M332.5 490v2M333.5 488v3M334.5 486v3M335.5 485v2M336.5 483v3M337.5 481v3M338.5 480v2M339.5 481v2M340.5 482v2M341.5 483v2M342.5 484v2M343.5 485v2M344.5 486v2M345.5 487v2M346.5 488v2M347.5 489v9M348.5 497v11M349.5 507v10M350.5 516v11M351.5 526v10M352.5 535v11M353.5 545v11M354.5 555v10M355.5 558v10M356.5 545v14M357.5 533v13M358.5 521v13M359.5 508v14M360.5 496v13M361.5 483v14M362.5 471v13M363.5 471v4M364.5 474v5M365.5 478v5M366.5 482v5M367.5 486v4M368.5 489v5M369.5 493v5M370.5 497v2M371.5 494v4M372.5 492v3M373.5 489v4M374.5 486v4M375.5 484v3M376.5 481v4M377.5 480v2M378.5 481v3M379.5 483v3M380.5 485v3M381.5 487v3M382.5 489v4M383.5 492v3M384.5 494v2M385.5 495v1M386.5 495v2M387.5 496v2M388.5 497v1M389.5 497v2M390.5 498v1M391.5 496v3M392.5 494v3M393.5 493v2M394.5 491v3M395.5 489v3M396.5 487v3M397.5 487v1M398.5 487v2M399.5 488v1M400.5 488v1M401.5 488v1M402.5 488v1M403.5 484v5M404.5 479v6M405.5 475v5M406.5 471v5M407.5 467v5M408.5 464v4M409.5 464v4M410.5 467v4M411.5 470v3M412.5 472v4M413.5 475v4M414.5 478v1M415.5 478v1M416.5 478v1M417.5 478v1M418.5 478v1M419.5 478v2M420.5 479v4M421.5 482v4M422.5 485v4M423.5 488v4M424.5 491v4M425.5 494v1M426.5 494v1M427.5 494v1M428.5 494v1M429.5 493v2M430.5 487v7M431.5 482v6M432.5 476v7M433.5 470v7M434.5 465v6M435.5 466v6M436.5 471v5M437.5 475v5M438.5 479v6M439.5 484v6M440.5 489v6M441.5 494v6M442.5 499v6M443.5 504v7M444.5 503v8M445.5 494v10M446.5 485v10M447.5 476v10M448.5 470v7M449.5 475v13M450.5 487v13M451.5 499v13M452.5 511v12M453.5 511v12M454.5 500v12M455.5 489v12M456.5 478v12M457.5 475v6M458.5 480v7M459.5 486v8M460.5 493v7M461.5 498v4M462.5 494v5M463.5 491v4M464.5 487v5M465.5 485v3M466.5 486v2M467.5 487v2M468.5 488v3M469.5 490v2M470.5 491v2M471.5 492v2M472.5 493v2M473.5 494v5M474.5 498v6M475.5 503v5M476.5 507v5M477.5 496v14M478.5 484v13M479.5 472v13M480.5 466v7M481.5 468v7M482.5 474v6M483.5 479v6M484.5 484v2M485.5 483v2M486.5 482v2M487.5 481v3M488.5 483v4M489.5 486v4M490.5 489v4M491.5 488v4M492.5 484v5M493.5 481v4M494.5 478v4M495.5 474v5M496.5 471v4M497.5 469v4M498.5 472v9M499.5 480v9M500.5 488v7M501.5 494v2M502.5 495v1M503.5 495v1M504.5 492v4M505.5 489v4M506.5 485v5M507.5 485v6M508.5 490v6M509.5 495v5M510.5 492v9M511.5 484v9M512.5 476v9M513.5 476v8M514.5 483v8M515.5 490v8M516.5 497v2M517.5 498v1M518.5 497v2M519.5 489v9M520.5 482v8M521.5 478v5M522.5 478v1M523.5 478v2M524.5 478v2M525.5 476v3M526.5 475v2M527.5 474v5M528.5 478v6M529.5 483v5M530.5 487v5M531.5 491v5M532.5 495v4M533.5 498v2M534.5 499v3M535.5 490v11M536.5 481v10M537.5 475v7M538.5 474v2M539.5 472v3M540.5 468v5M541.5 463v6M542.5 461v5M543.5 465v7M544.5 471v7M545.5 477v2M546.5 478v1M547.5 478v2M548.5 478v2M549.5 476v3M550.5 471v6M551.5 466v6M552.5 466v5M553.5 470v5M554.5 473v3M555.5 471v3M556.5 470v7M557.5 476v11M558.5 486v9M559.5 480v12M560.5 471v10M561.5 469v3M562.5 467v3M563.5 467v1M564.5 467v1M565.5 467v8M566.5 474v8M567.5 475v9M568.5 463v13M569.5 459v6M570.5 464v8M571.5 470v5M572.5 462v9M573.5 459v9M574.5 467v15M575.5 481v7M576.5 479v6M577.5 477v5M578.5 481v8M579.5 483v8M580.5 473v11M581.5 470v4M582.5 473v6M583.5 475v4M584.5 472v4M585.5 470v3M586.5 468v3M587.5 469v4M588.5 472v4M589.5 468v6M590.5 465v4M591.5 466v4M592.5 469v6M593.5 474v7M594.5 477v4M595.5 473v5M596.5 471v3M597.5 470v6M598.5 475v17M599.5 487v10M600.5 473v15M601.5 470v4M602.5 468v3M603.5 469v4M604.5 471v3M605.5 468v4M606.5 468v2M607.5 469v1M608.5 469v1M609.5 469v12M610.5 480v14M611.5 477v15M612.5 471v7M613.5 472v2M614.5 473v4M615.5 476v7M616.5 482v10M617.5 478v15M618.5 468v11M619.5 466v3M620.5 466v19M621.5 484v13M622.5 463v25M623.5 461v5M624.5 465v6M625.5 470v7M626.5 476v13M627.5 488v6M628.5 487v5M629.5 468v20M630.5 459v10M631.5 454v6M632.5 459v16M633.5 469v7M634.5 466v4M635.5 466v2M636.5 467v6M637.5 471v3M638.5 470v2M639.5 470v2M640.5 466v5M641.5 465v11M642.5 475v7M643.5 479v4M644.5 468v12M645.5 466v3M646.5 465v6M647.5 470v5M648.5 470v4M649.5 462v9M650.5 453v10M651.5 450v9M652.5 458v12M653.5 469v8M654.5 466v9M655.5 464v3M656.5 464v4M657.5 467v2M658.5 465v3M659.5 463v3M660.5 455v9M661.5 458v23M662.5 469v13M663.5 467v23M664.5 474v24M665.5 460v15M666.5 466v8M667.5 466v5M668.5 464v3M669.5 466v9M670.5 474v10M671.5 469v14M672.5 468v9M673.5 476v5M674.5 463v19M675.5 458v6M676.5 459v8M677.5 460v10M678.5 454v7M679.5 458v10M680.5 467v6M681.5 468v4M682.5 459v10M683.5 452v15M684.5 466v15M685.5 465v9M686.5 465v3M687.5 458v8M688.5 452v7M689.5 453v2M690.5 454v14M691.5 461v14M692.5 455v7M693.5 457v2M694.5 457v16M695.5 463v12M696.5 462v2M697.5 459v4M698.5 450v10M699.5 443v8M700.5 447v12M701.5 458v5M702.5 460v7M703.5 454v7M704.5 454v17M705.5 459v14M706.5 449v11M707.5 450v2M708.5 451v5M709.5 455v13M710.5 462v10M711.5 461v4M712.5 457v7M713.5 455v3M714.5 453v3M715.5 446v9M716.5 444v6M717.5 449v5M718.5 453v8M719.5 459v3M720.5 461v5M721.5 452v13M722.5 455v11M723.5 455v13M724.5 453v9M725.5 450v10M726.5 446v7M727.5 449v6M728.5 450v4M729.5 451v4M730.5 444v12M731.5 445v22M732.5 453v12M733.5 448v6M734.5 449v6M735.5 454v3M736.5 451v5M737.5 444v8M738.5 446v15M739.5 449v11M740.5 445v5M741.5 445v3M742.5 446v11M743.5 449v10M744.5 451v7M745.5 444v10M746.5 445v15M747.5 447v19M748.5 446v8M749.5 450v8M750.5 449v7M751.5 442v18M752.5 444v9M753.5 443v5M754.5 444v11M755.5 445v12M756.5 442v4M757.5 444v15M758.5 444v13M759.5 447v17M760.5 443v8M761.5 445v9M762.5 453v5M763.5 446v10M764.5 442v5M765.5 442v6M766.5 445v4M767.5 442v6M768.5 443v3M769.5 442v2M770.5 442v2M771.5 443v8M772.5 441v7M773.5 446v5M774.5 445v10M775.5 443v3M776.5 443v6M777.5 445v4M778.5 444v5M779.5 446v3M780.5 442v5M781.5 441v6M782.5 442v11M783.5 447v11M784.5 444v4M785.5 446v7M786.5 443v10M787.5 443v3M788.5 441v3M789.5 437v7M790.5 437v9M791.5 440v7M792.5 439v8M793.5 441v5M794.5 440v15M795.5 441v16M796.5 441v3M797.5 443v5M798.5 441v8M799.5 438v4M800.5 438v3M801.5 440v7M802.5 443v5M803.5 441v13M804.5 440v8M805.5 440v8M806.5 439v5M807.5 441v7M808.5 440v8M809.5 443v5M810.5 439v5M811.5 436v10M812.5 440v8M813.5 441v12M814.5 439v4M815.5 441v5M816.5 438v4M817.5 437v3M818.5 439v2M819.5 438v4M820.5 438v6M821.5 438v9M822.5 436v6M823.5 436v9M824.5 434v11M825.5 438v11M826.5 436v9M827.5 435v8M828.5 433v9M829.5 437v7M830.5 438v10M831.5 441v8M832.5 436v6M833.5 438v10M834.5 436v5M835.5 437v6M836.5 439v6M837.5 438v10M838.5 435v13M839.5 440v16M840.5 437v14M841.5 435v6M842.5 433v6M843.5 437v12M844.5 438v11M845.5 437v4M846.5 438v4M847.5 434v7M848.5 434v7M849.5 436v4M850.5 435v8M851.5 437v8M852.5 432v12M853.5 434v4M854.5 437v7M855.5 436v10M856.5 437v5M857.5 434v4M858.5 434v10M859.5 435v5M860.5 435v6M861.5 436v9M862.5 438v6M863.5 436v6M864.5 436v8M865.5 435v3M866.5 435v6M867.5 435v5M868.5 433v7M869.5 433v7M870.5 434v3M871.5 435v3M872.5 434v6M873.5 431v7M874.5 434v3M875.5 434v4M876.5 434v5M877.5 434v5M878.5 435v10M879.5 431v13M880.5 429v9M881.5 433v7M882.5 433v8M883.5 433v4M884.5 429v12M885.5 432v5M886.5 430v7M887.5 429v5M888.5 433v7M889.5 427v9M890.5 431v4M891.5 431v6M892.5 432v3M893.5 432v5M894.5 432v11M895.5 430v7M896.5 434v3M897.5 430v7M898.5 429v8M899.5 428v8M900.5 427v9M901.5 430v7M902.5 429v8M903.5 428v5M904.5 430v4M905.5 430v4M906.5 429v4M907.5 428v7M908.5 426v7M909.5 426v9M910.5 429v8M911.5 429v7M912.5 427v5M913.5 425v11M914.5 427v5M915.5 426v5M916.5 428v2M917.5 427v8M918.5 426v7M919.5 423v8M920.5 426v11M921.5 424v14M922.5 426v5M923.5 426v5M924.5 426v9M925.5 425v6M926.5 425v8M927.5 425v6M928.5 423v5M929.5 424v7M930.5 425v6M931.5 422v11M932.5 422v5M933.5 424v7M934.5 423v7M935.5 424v5M936.5 423v10M937.5 422v7M938.5 425v5M939.5 424v4M940.5 422v8M941.5 423v4M942.5 422v6M943.5 422v8M944.5 421v8M945.5 422v6M946.5 424v5M947.5 422v5M948.5 421v7M949.5 420v10M950.5 421v8M951.5 424v4M952.5 420v8M953.5 420v11M954.5 421v5M955.5 420v7M956.5 418v9M957.5 420v5M958.5 418v7M959.5 420v5M960.5 420v6M961.5 423v5M962.5 419v9M963.5 420v5M964.5 420v10M965.5 420v10M966.5 419v7M967.5 420v7M968.5 417v9M969.5 417v13M970.5 420v6M971.5 420v5M972.5 417v9M973.5 417v11M974.5 418v8M975.5 420v6M976.5 416v8M977.5 417v8M978.5 418v8M979.5 418v6M980.5 417v7M981.5 416v12M982.5 417v5M983.5 416v6M984.5 419v4M985.5 418v7M986.5 417v5M987.5 417v4M988.5 417v4M989.5 416v5M990.5 416v7M991.5 417v6M992.5 416v5M993.5 417v8M994.5 416v5M995.5 415v5M996.5 415v6M997.5 416v5M998.5 416v5M999.5 416v9M1000.5 415v4M1001.5 416v6M1002.5 416v7M1003.5 415v6M1004.5 413v8M1005.5 413v7M1006.5 413v7M1007.5 414v7M1008.5 414v10M1009.5 414v6M1010.5 415v6M1011.5 413v8M1012.5 413v5M1013.5 413v6M1014.5 413v4M1015.5 413v5M1016.5 414v7M1017.5 413v4M1018.5 413v4M1019.5 413v3M1020.5 412v5M1021.5 413v7M1022.5 413v5M1023.5 413v7M1024.5 411v7M1025.5 411v8M1026.5 411v6M1027.5 413v4M1028.5 410v5M1029.5 412v5M1030.5 412v6M1031.5 411v7M1032.5 410v8M1033.5 411v6M1034.5 412v4M1035.5 411v6M1036.5 410v5M1037.5 410v6M1038.5 409v6M1039.5 411v5M1040.5 410v6M1041.5 410v8M1042.5 409v7M1043.5 410v7M1044.5 408v8M1045.5 410v7M1046.5 411v8M1047.5 410v6M1048.5 408v7M1049.5 409v5M1050.5 408v6M1051.5 408v5M1052.5 409v7M1053.5 407v7M1054.5 407v7M1055.5 408v5M1056.5 408v5M1057.5 409v5M1058.5 406v5M1059.5 407v7M1060.5 406v8M1061.5 406v8M1062.5 406v8M1063.5 405v9M1064.5 406v10M1065.5 406v8M1066.5 405v8M1067.5 407v6M1068.5 406v7M1069.5 405v7M1070.5 406v7M1071.5 406v4M1072.5 406v5M1073.5 406v7M1074.5 405v8M1075.5 405v7M1076.5 406v5M1077.5 404v9M1078.5 406v7M1079.5 405v7M1080.5 404v6M1081.5 404v7M1082.5 405v7M1083.5 405v6M1084.5 403v8M1085.5 404v7M1086.5 404v6M1087.5 403v7M1088.5 404v5M1089.5 403v7M1090.5 404v5M1091.5 403v9M1092.5 404v6M1093.5 403v6M1094.5 403v6M1095.5 403v9M1096.5 403v6M1097.5 403v8M1098.5 402v7M1099.5 403v5M1100.5 400v10M1101.5 401v12M1102.5 402v6M1103.5 401v7M1104.5 402v5M1105.5 401v6M1106.5 402v7M1107.5 402v7M1108.5 402v8M1109.5 401v7M1110.5 400v5M1111.5 399v9M1112.5 399v8M1113.5 399v7M1114.5 399v10M1115.5 400v8M1116.5 400v7M1117.5 400v6M1118.5 398v11M1119.5 398v7M1120.5 397v9M1121.5 399v6M1122.5 399v6M1123.5 399v9M1124.5 399v8M1125.5 400v8M1126.5 398v6M1127.5 398v7M1128.5 399v7M1129.5 397v8M1130.5 398v6M1131.5 398v6M1132.5 397v8M1133.5 398v6M1134.5 397v7M1135.5 398v6M1136.5 398v7M1137.5 398v5M1138.5 398v8M1139.5 397v8M1140.5 397v7M1141.5 396v7M1142.5 397v7M1143.5 396v7M1144.5 396v8M1145.5 397v7M1146.5 397v6M1147.5 397v7M1148.5 396v8M1149.5 395v8M1150.5 396v6M1151.5 396v6M1152.5 396v7M1153.5 394v10M1154.5 396v6M1155.5 395v8M1156.5 395v7M1157.5 394v9M1158.5 395v7M1159.5 395v7M1160.5 395v7M1161.5 394v7M1162.5 394v6M1163.5 393v9M1164.5 394v6M1165.5 393v10M1166.5 395v5M1167.5 393v8M1168.5 393v9M1169.5 392v7M1170.5 394v7" stroke="#00ff00" fill="none"/>
<rect x="1176" y="587" width="5" height="5" fill="#b4b414"/>
<rect x="1176" y="606" width="5" height="5" fill="#00ff00"/>
<g shape-rendering="auto" font-family="'Liberation Sans',Arial,sans-serif" font-size="15px" fill="#000">
<text x="76" y="144" font-size="16px" textLength="152" lengthAdjust="spacingAndGlyphs">FR Magnitude dB V/V</text>
<text transform="translate(1171,144) scale(.968,1.04)" text-anchor="end" xml:space="preserve">Left  Avg:16</text>
<text transform="translate(70.5,156.5) scale(.968,1.04)" text-anchor="end">10.0</text><text transform="translate(70.5,209.5) scale(.968,1.04)" text-anchor="end">-10.0</text><text transform="translate(70.5,261.5) scale(.968,1.04)" text-anchor="end">-30.0</text><text transform="translate(70.5,314.5) scale(.968,1.04)" text-anchor="end">-50.0</text><text transform="translate(70.5,366.5) scale(.968,1.04)" text-anchor="end">-70.0</text><text transform="translate(70.5,419.5) scale(.968,1.04)" text-anchor="end">-90.0</text><text transform="translate(70.5,471.5) scale(.968,1.04)" text-anchor="end">-110.0</text><text transform="translate(70.5,524.5) scale(.968,1.04)" text-anchor="end">-130.0</text><text transform="translate(70.5,576.5) scale(.968,1.04)" text-anchor="end">-150.0</text><text transform="translate(70.5,629.5) scale(.968,1.04)" text-anchor="end">-170.0</text>
<text transform="translate(74,645) scale(.968,1.04)" text-anchor="middle">20</text><text transform="translate(220,645) scale(.968,1.04)" text-anchor="middle">50</text><text transform="translate(330,645) scale(.968,1.04)" text-anchor="middle">100</text><text transform="translate(440,645) scale(.968,1.04)" text-anchor="middle">200</text><text transform="translate(585,645) scale(.968,1.04)" text-anchor="middle">500</text><text transform="translate(695,645) scale(.968,1.04)" text-anchor="middle">1k</text><text transform="translate(805,645) scale(.968,1.04)" text-anchor="middle">2k</text><text transform="translate(951,645) scale(.968,1.04)" text-anchor="middle">5k</text><text transform="translate(1061,645) scale(.968,1.04)" text-anchor="middle">10k</text><text transform="translate(1171,645) scale(.968,1.04)" text-anchor="middle">20k</text>
<text transform="translate(76,667) scale(.968,1.04)" text-anchor="start">Cursor: 14759.77 Hz, -85.16 dB</text>
<text transform="translate(1171,667) scale(.968,1.04)" text-anchor="end">F(Hz)</text>
<text transform="translate(1182,593.5) scale(.968,1.04)" text-anchor="start">Over</text>
<text transform="translate(1182,612.5) scale(.968,1.04)" text-anchor="start">Magn</text>
<g font-size="16px" text-anchor="middle">
<text x="1181" y="165.5">A</text>
<text x="1181" y="181.5">R</text>
<text x="1181" y="197.5">T</text>
<text x="1181" y="213.5">A</text>
</g>
<g font-size="19.5px" fill="#ff8000">
<text x="997" y="189.5">Left Input</text>
<text x="997" y="212.5">Yellow: Plugged</text>
<text x="997" y="235.5">Green: Unplugged</text>
</g>
</g>
</svg>
</body></html>
